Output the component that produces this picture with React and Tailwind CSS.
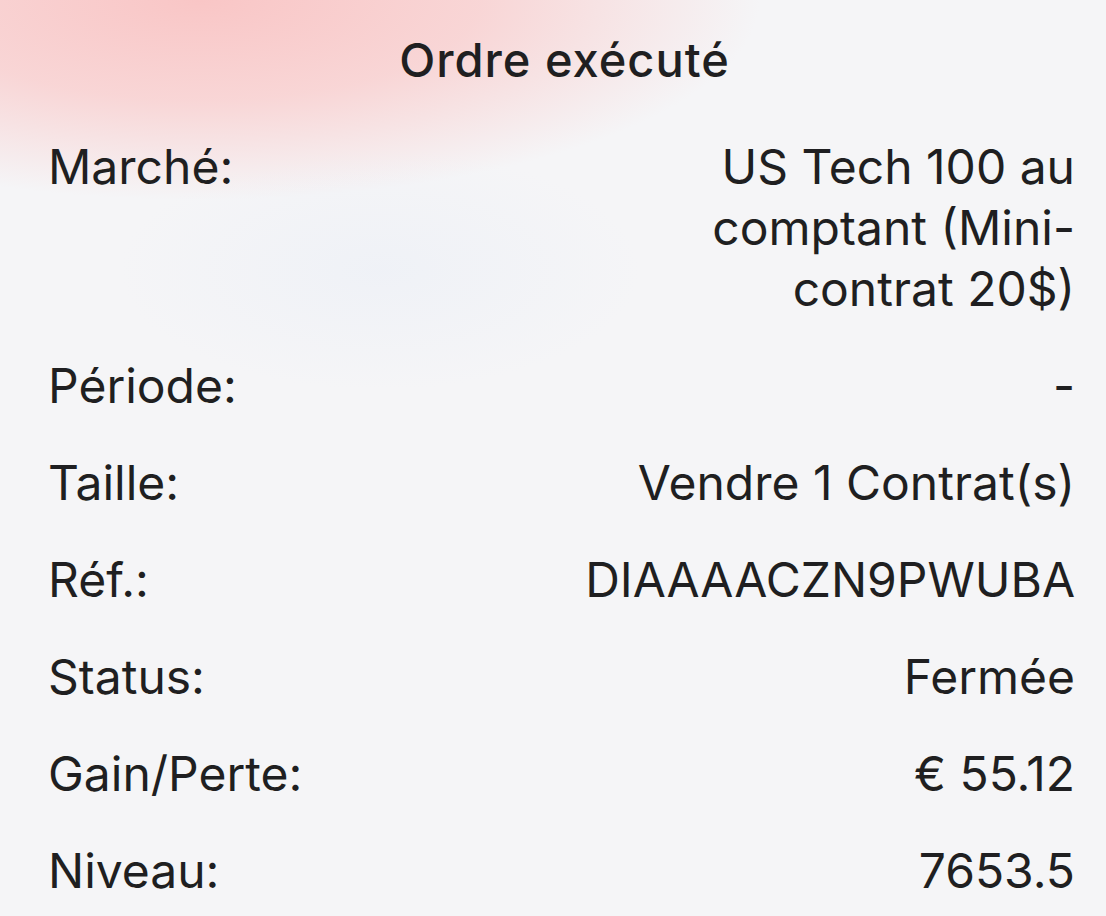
import React from "react";

const rows = [
  { label: "Période:", value: ["-"] },
  { label: "Taille:", value: ["Vendre 1 Contrat(s)"] },
  { label: "Réf.:", value: ["DIAAAACZN9PWUBA"] },
  { label: "Status:", value: ["Fermée"] },
  { label: "Gain/Perte:", value: ["€ 55.12"] },
  { label: "Niveau:", value: ["7653.5"] },
];

function Row({ label, value }) {
  return (
    <div className="flex justify-between items-start gap-6">
      <div className="whitespace-nowrap">{label}</div>
      <div className="text-right">
        {value.map((v, i) => (
          <div key={i} className="whitespace-nowrap">{v}</div>
        ))}
      </div>
    </div>
  );
}

export default function App() {
  return (
    <div
      className="relative w-[1106px] h-[916px] overflow-hidden bg-[#f5f5f7] text-[#1f1f21]"
      style={{ fontFamily: "Inter, 'Liberation Sans', sans-serif" }}
    >
      <div className="absolute inset-0 bg-[radial-gradient(ellipse_560px_200px_at_200px_0px,rgba(249,198,198,1),rgba(249,208,208,0.85)_50%,rgba(245,245,247,0)_100%)]" />
      <div className="absolute inset-0 bg-[radial-gradient(ellipse_260px_120px_at_380px_270px,rgba(230,236,246,0.4),rgba(245,245,247,0)_100%)]" />
      <div className="relative flex flex-col pl-[48px] pr-[31px] pt-[32px]">
        <div className="text-center text-[47px] leading-[56px] font-medium tracking-[1px] pl-[6px]">
          Ordre exécuté
        </div>
        <div className="mt-[48px] flex flex-col gap-[36px] text-[48px] leading-[61px]">
          <Row label="Marché:" value={["US Tech 100 au", "comptant (Mini-", "contrat 20$)"]} />
          {rows.map((r) => (
            <Row key={r.label} label={r.label} value={r.value} />
          ))}
        </div>
      </div>
    </div>
  );
}
